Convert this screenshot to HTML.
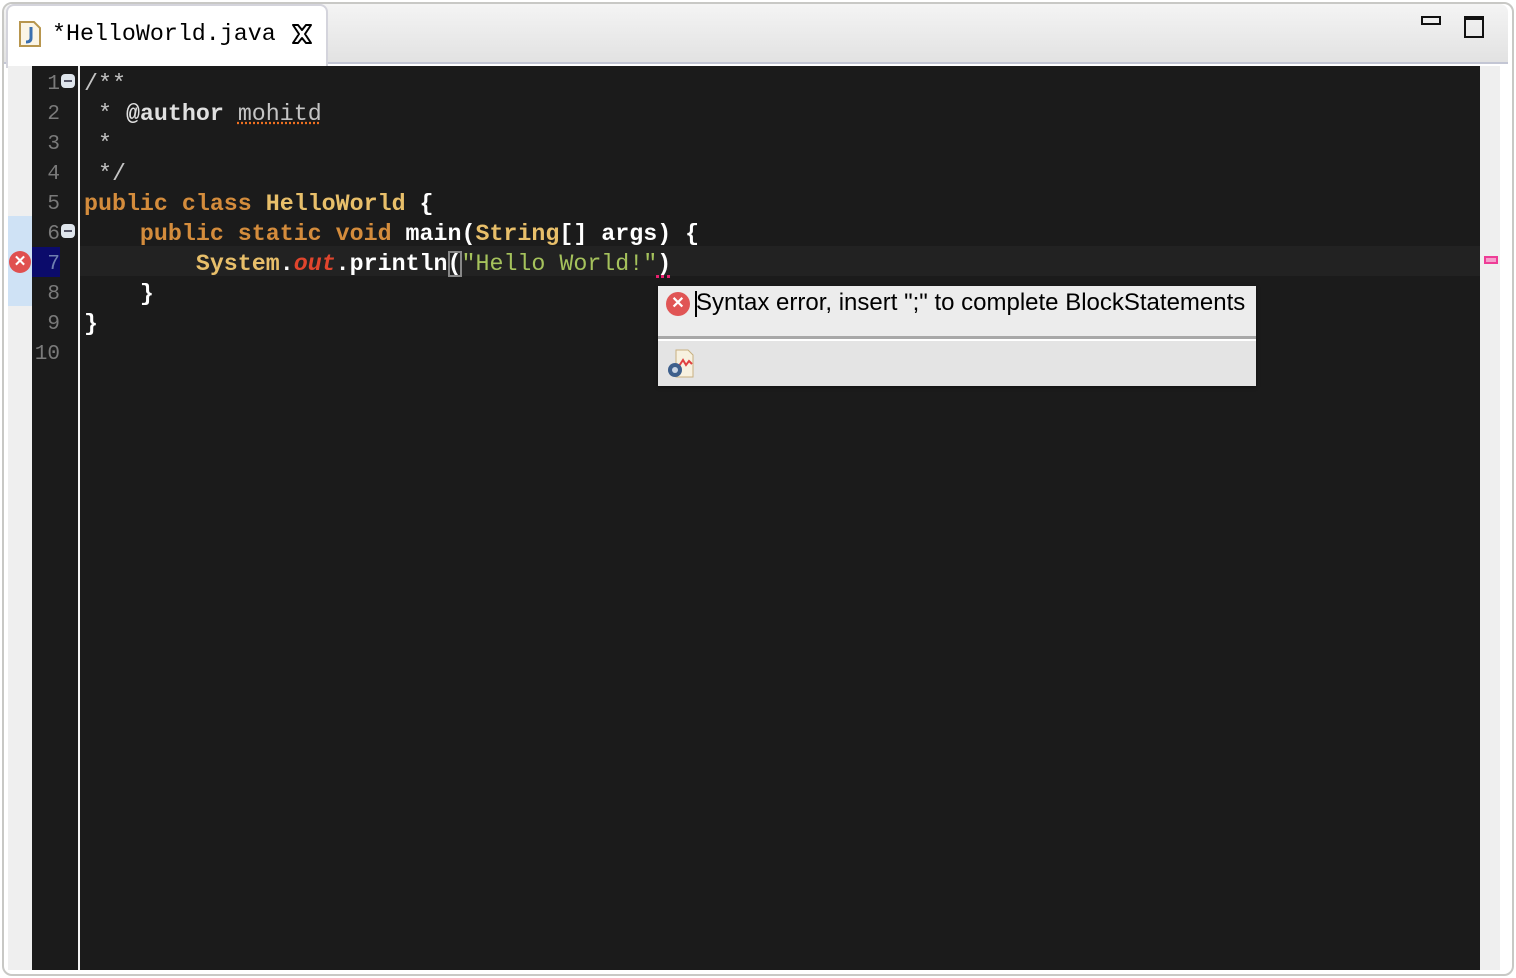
<!DOCTYPE html>
<html><head><style>
body{margin:0;width:1516px;height:978px;background:#fff;overflow:hidden;position:relative;font-family:"Liberation Mono",monospace}
.frame{position:absolute;left:2px;top:2px;width:1508px;height:970px;border:2px solid #c8c8c5;border-radius:10px;background:#fff}
.tabbar{position:absolute;left:4px;top:4px;width:1504px;height:58px;background:linear-gradient(#f4f4f4,#e2e2e2);border-bottom:2px solid #c3c6d4;border-radius:8px 8px 0 0}
.tab{position:absolute;left:6px;top:4px;width:318px;height:62px;background:#fff;border:2px solid #d4d4dc;border-bottom:none;border-radius:8px 8px 0 0}
.tab .t{position:absolute;left:44px;top:15px;font-size:23.3px;color:#000}
.ruler{position:absolute;left:8px;top:66px;width:24px;height:904px;background:#efefef}
.nums{position:absolute;left:32px;top:66px;width:46px;height:904px;background:#1b1b1b}
.sep{position:absolute;left:78px;top:66px;width:2px;height:904px;background:#f4f4f4}
.code{position:absolute;left:80px;top:66px;width:1400px;height:904px;background:#1b1b1b}
.ov{position:absolute;left:1480px;top:66px;width:20px;height:904px;background:#efefef}
.ln{position:absolute;left:32px;width:28px;text-align:right;font-size:21px;color:#7a7a7a;height:30px;line-height:30px}
.cl{position:absolute;left:84px;font-size:23.3px;line-height:30px;height:30px;white-space:pre;color:#fff;font-weight:bold}
.k{color:#d48c3c}.c{color:#e8bf6a}.cm{color:#c4c4c4;font-weight:normal}.s{color:#a5c25c;font-weight:normal}.o{color:#e0452d;font-style:italic}
.popup{position:absolute;left:658px;top:286px;width:598px;height:100px;background:#ececec;box-shadow:0 1px 4px rgba(0,0,0,.4)}
</style></head><body>
<div class="frame"></div>
<div class="tabbar"></div>
<div class="tab">
<svg style="position:absolute;left:10px;top:14px" width="24" height="28" viewBox="0 0 24 28"><path d="M2 2h14l6 6v18H2z" fill="#fbf5e6" stroke="#b8964e" stroke-width="2"/><path d="M13 7v11q0 4-5 4" stroke="#3a6fb0" stroke-width="3" fill="none"/></svg>
<div class="t">*HelloWorld.java</div>
<svg style="position:absolute;left:282px;top:16px" width="24" height="24" viewBox="0 0 24 24"><path d="M3 3h5l4 5 4-5h5l-6 9 6 9h-5l-4-5-4 5H3l6-9z" fill="#fff" stroke="#000" stroke-width="2" stroke-linejoin="round"/></svg>
</div>
<div style="position:absolute;left:1421px;top:16px;width:16px;height:5px;border:2px solid #111"></div>
<div style="position:absolute;left:1464px;top:16px;width:16px;height:16px;border:2px solid #111;border-top-width:4px"></div>
<div class="ruler"></div>
<div style="position:absolute;left:8px;top:216px;width:24px;height:90px;background:#cfe2f5"></div>
<div class="nums"></div>
<div style="position:absolute;left:32px;top:247px;width:28px;height:30px;background:#0b0b6b"></div>
<div class="sep"></div>
<div class="code"></div>
<div style="position:absolute;left:80px;top:246px;width:1400px;height:30px;background:#222"></div>
<div class="ov"></div>
<div style="position:absolute;left:1484px;top:256px;width:14px;height:8px;background:#f4a0cc;border:2px solid #ee3c96;box-sizing:border-box"></div>

<div class="ln" style="top:70px">1</div><div class="ln" style="top:100px">2</div><div class="ln" style="top:130px">3</div><div class="ln" style="top:160px">4</div><div class="ln" style="top:190px">5</div><div class="ln" style="top:220px">6</div><div class="ln" style="top:250px;color:#6f7fb0">7</div><div class="ln" style="top:280px">8</div><div class="ln" style="top:310px">9</div><div class="ln" style="top:340px">10</div>
<div style="position:absolute;left:61px;top:74px;width:14px;height:14px;border-radius:4px;background:#dfe5ec"><div style="margin:6px 3px;height:2px;background:#556"></div></div>
<div style="position:absolute;left:61px;top:224px;width:14px;height:14px;border-radius:4px;background:#dfe5ec"><div style="margin:6px 3px;height:2px;background:#556"></div></div>
<div style="position:absolute;left:9px;top:251px;width:22px;height:22px;border-radius:50%;background:#e05050;color:#fff;font:bold 15px 'Liberation Sans';text-align:center;line-height:22px">✕</div>

<div class="cl cm" style="top:69px">/**</div>
<div class="cl cm" style="top:99px"> * <b style="color:#e0e0e0">@author</b> <span style="text-decoration:underline dotted #f07020">mohitd</span></div>
<div class="cl cm" style="top:129px"> *</div>
<div class="cl cm" style="top:159px"> */</div>
<div class="cl" style="top:189px"><span class="k">public class</span> <span class="c">HelloWorld</span> {</div>
<div class="cl" style="top:219px">    <span class="k">public static void</span> main(<span class="c">String</span>[] args) {</div>
<div class="cl" style="top:249px">        <span class="c">System</span>.<span class="o">out</span>.println<span style="outline:2px solid #888;outline-offset:-2px">(</span><span class="s">"Hello World!"</span>)</div>
<div style="position:absolute;left:656px;top:272px;width:14px;height:3px;border-bottom:3px dotted #e8206e"></div>
<div class="cl" style="top:279px">    }</div>
<div class="cl" style="top:309px">}</div>

<div class="popup">
<div style="position:absolute;left:8px;top:6px;width:24px;height:24px;border-radius:50%;background:#e05555;color:#fff;font:bold 16px 'Liberation Sans';text-align:center;line-height:24px">✕</div>
<div style="position:absolute;left:37px;top:5px;width:2px;height:26px;background:#000"></div>
<div style="position:absolute;left:38px;top:3px;font:24px 'Liberation Sans',sans-serif;color:#000;white-space:nowrap">Syntax error, insert ";" to complete BlockStatements</div>
<div style="position:absolute;left:0;top:50px;width:598px;height:3px;background:#a8a8a8"></div>
<div style="position:absolute;left:0;top:53px;width:598px;height:2px;background:#fff"></div>
<div style="position:absolute;left:0;top:55px;width:598px;height:45px;background:#e4e4e4"></div>
<svg style="position:absolute;left:8px;top:62px" width="30" height="32" viewBox="0 0 30 32"><path d="M10 2h12l5 5v22H10z" fill="#f7f1e0" stroke="#c8b080"/><path d="M13 18l4-6 3 5 3-4 3 3" stroke="#e04040" fill="none" stroke-width="2"/><circle cx="9" cy="22" r="7" fill="#3d5f8c"/><circle cx="9" cy="22" r="3" fill="#c8d4e4"/></svg>
</div>
</body></html>
